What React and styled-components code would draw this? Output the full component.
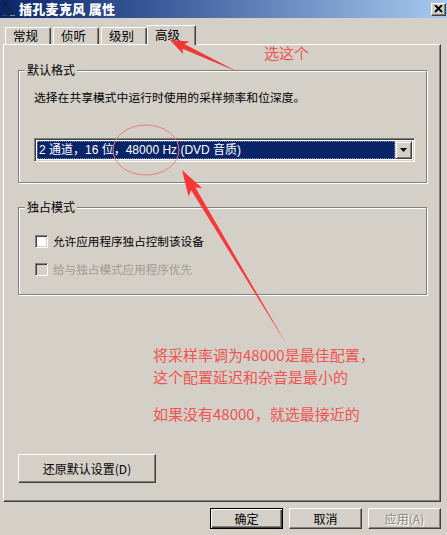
import React from "react";
import styled, { createGlobalStyle } from "styled-components";

const GlobalStyle = createGlobalStyle`
  html, body {
    margin: 0;
    padding: 0;
    background: #d4d0c8;
  }
  body {
    font-family: "Noto Sans CJK SC", "Liberation Sans", sans-serif;
    font-size: 12px;
    color: #000;
  }
`;

const Window = styled.div`
  position: relative;
  width: 447px;
  height: 535px;
  overflow: hidden;
  background: #d4d0c8;
  display: flex;
  flex-direction: column;
`;

const TitleBar = styled.div`
  height: 18px;
  display: flex;
  align-items: center;
  padding: 0 1px 0 1px;
  background: linear-gradient(to right, #0a246a 0%, #3a5a9a 35%, #a6caf0 100%);
  box-sizing: border-box;
`;

const TitleText = styled.span`
  margin-left: 3px;
  color: #fff;
  font-weight: 900;
  font-size: 13px;
  line-height: 18px;
  letter-spacing: 0.3px;
`;

const CloseButton = styled.div`
  margin-left: auto;
  width: 15px;
  height: 13px;
  box-sizing: border-box;
  background: #d4d0c8;
  border: 1px solid;
  border-color: #fff #404040 #404040 #fff;
  box-shadow: inset -1px -1px #808080;
  display: flex;
  align-items: center;
  justify-content: center;
`;

const Body = styled.div`
  flex: 1;
  display: flex;
  flex-direction: column;
  padding: 0 6px 0 3px;
`;

const TabStrip = styled.div`
  height: 19px;
  margin-top: 7px;
  display: flex;
  align-items: flex-end;
`;

const Tab = styled.div`
  position: relative;
  z-index: 1;
  box-sizing: border-box;
  width: ${(p) => (p.$active ? 49 : 46)}px;
  height: ${(p) => (p.$active ? 20 : 17)}px;
  margin-left: ${(p) => (p.$active ? 0 : 2)}px;
  margin-bottom: ${(p) => (p.$active ? -1 : 0)}px;
  background: #d4d0c8;
  border-top: 1px solid #fff;
  border-left: 1px solid #fff;
  border-right: 1px solid #404040;
  border-radius: 2px 2px 0 0;
  box-shadow: inset -1px 0 #808080;
  padding: ${(p) => (p.$active ? "1px 0 0 7px" : "0 0 0 7px")};
  font-size: 12.5px;
  line-height: 15px;
`;

const Panel = styled.div`
  height: 458px;
  box-sizing: border-box;
  border-top: 1px solid #fff;
  border-left: 1px solid #fff;
  border-right: 1px solid #404040;
  border-bottom: 1px solid #404040;
  box-shadow: inset -1px -1px #808080;
  padding: 17px 13px 18px 14px;
  display: flex;
  flex-direction: column;
`;

const GroupBox = styled.fieldset`
  margin: ${(p) => p.$gap || 0}px 0 0 0;
  padding: 0;
  min-width: 0;
  border: 1px solid #808080;
  box-shadow: 1px 1px 0 #fff, inset 1px 1px 0 #fff;
`;

const GroupLegend = styled.legend`
  margin-left: 6px;
  padding: 0 2px;
  background: #d4d0c8;
  font-size: 12px;
  line-height: 16px;
`;

const GroupBody = styled.div`
  padding: ${(p) => p.$pad};
  display: flex;
  flex-direction: column;
`;

const Description = styled.div`
  font-size: 11.8px;
  line-height: 16px;
  white-space: nowrap;
`;

const Select = styled.div`
  margin-top: 33px;
  height: 24px;
  box-sizing: border-box;
  border: 1px solid;
  border-color: #808080 #fff #fff #808080;
  box-shadow: inset 1px 1px #404040, inset -1px -1px #d4d0c8;
  background: #fff;
  padding: 2px;
  display: flex;
`;

const SelectValue = styled.div`
  flex: 1;
  background: #0a246a;
  color: #fff;
  font-family: "Liberation Sans", "Noto Sans CJK SC", sans-serif;
  font-size: 12px;
  line-height: 18px;
  padding-left: 2px;
  outline: 1px dotted rgba(255, 255, 255, 0.45);
  outline-offset: -1px;
  white-space: nowrap;
`;

const DropButton = styled.div`
  width: 17px;
  box-sizing: border-box;
  background: #d4d0c8;
  border: 1px solid;
  border-color: #d4d0c8 #404040 #404040 #d4d0c8;
  box-shadow: inset 1px 1px #fff, inset -1px -1px #808080;
  display: flex;
  align-items: center;
  justify-content: center;
`;

const CheckRow = styled.div`
  height: 16px;
  margin-top: ${(p) => p.$gap}px;
  display: flex;
  align-items: center;
`;

const CheckBox = styled.span`
  width: 13px;
  height: 13px;
  box-sizing: border-box;
  border: 1px solid;
  border-color: #808080 #fff #fff #808080;
  box-shadow: inset 1px 1px #404040, inset -1px -1px #d4d0c8;
  background: ${(p) => (p.$disabled ? "#d4d0c8" : "#fff")};
`;

const CheckLabel = styled.span`
  margin-left: 5px;
  font-size: 11.6px;
  line-height: 16px;
  color: ${(p) => (p.$disabled ? "#a09c94" : "#000")};
`;

const PushButton = styled.div`
  width: ${(p) => p.$w}px;
  height: ${(p) => p.$h}px;
  box-sizing: border-box;
  background: #d4d0c8;
  border: 1px solid;
  border-color: ${(p) => (p.$default ? "#000" : "#fff #404040 #404040 #fff")};
  box-shadow: ${(p) =>
    p.$default
      ? "inset 1px 1px #fff, inset -1px -1px #404040, inset -2px -2px #808080"
      : "inset -1px -1px #808080"};
  display: flex;
  align-items: center;
  justify-content: center;
  font-size: 12px;
  color: ${(p) => (p.$disabled ? "#8c8880" : "#000")};
  text-shadow: ${(p) => (p.$disabled ? "1px 1px 0 #fff" : "none")};
`;

const RestoreRow = styled.div`
  margin-top: auto;
  display: flex;
`;

const Footer = styled.div`
  display: flex;
  justify-content: flex-end;
  gap: 6px;
  padding-top: 6px;
`;

const Overlay = styled.svg`
  position: absolute;
  left: 0;
  top: 0;
  pointer-events: none;
  z-index: 5;
`;

const Note = styled.div`
  position: absolute;
  left: ${(p) => p.$x}px;
  top: ${(p) => p.$y}px;
  z-index: 6;
  color: #f25252;
  font-family: "Noto Sans CJK SC", sans-serif;
  font-size: 15px;
  line-height: 22px;
  white-space: nowrap;
`;

const MicIcon = () => (
  <svg width="15" height="16" viewBox="0 0 15 16">
    <path d="M2 1 L5 1 L6 4 L4 5 Z" fill="#1a1a1a" />
    <line x1="5" y1="4" x2="11" y2="13" stroke="#222" strokeWidth="1.5" />
    <line x1="1" y1="14.5" x2="6" y2="14.5" stroke="#444" strokeWidth="1.2" />
    <line x1="9" y1="14.5" x2="14" y2="14.5" stroke="#8a8a8a" strokeWidth="1" />
  </svg>
);

export default function App() {
  return (
    <Window>
      <GlobalStyle />
      <TitleBar>
        <MicIcon />
        <TitleText>插孔麦克风 属性</TitleText>
        <CloseButton>
          <svg width="9" height="8" viewBox="0 0 9 8">
            <path d="M1 0 L8 7 M8 0 L1 7" stroke="#000" strokeWidth="1.8" />
          </svg>
        </CloseButton>
      </TitleBar>

      <Body>
        <TabStrip>
          <Tab>常规</Tab>
          <Tab>侦听</Tab>
          <Tab>级别</Tab>
          <Tab $active>高级</Tab>
        </TabStrip>

        <Panel>
          <GroupBox>
            <GroupLegend>默认格式</GroupLegend>
            <GroupBody $pad="11px 11px 20px 15px">
              <Description>选择在共享模式中运行时使用的采样频率和位深度。</Description>
              <Select>
                <SelectValue>2 通道，16 位，48000 Hz (DVD 音质)</SelectValue>
                <DropButton>
                  <svg width="7" height="4" viewBox="0 0 7 4">
                    <path d="M0 0 H7 L3.5 4 Z" fill="#000" />
                  </svg>
                </DropButton>
              </Select>
            </GroupBody>
          </GroupBox>

          <GroupBox $gap={16}>
            <GroupLegend>独占模式</GroupLegend>
            <GroupBody $pad="0 11px 17px 16px">
              <CheckRow $gap={18}>
                <CheckBox />
                <CheckLabel>允许应用程序独占控制该设备</CheckLabel>
              </CheckRow>
              <CheckRow $gap={12}>
                <CheckBox $disabled />
                <CheckLabel $disabled>给与独占模式应用程序优先</CheckLabel>
              </CheckRow>
            </GroupBody>
          </GroupBox>

          <RestoreRow>
            <PushButton $w={138} $h={29}>还原默认设置(D)</PushButton>
          </RestoreRow>
        </Panel>

        <Footer>
          <PushButton $w={73} $h={21} $default>确定</PushButton>
          <PushButton $w={73} $h={21}>取消</PushButton>
          <PushButton $w={73} $h={21} $disabled>应用(A)</PushButton>
        </Footer>
      </Body>

      <Note $x={264} $y={42}>选这个</Note>
      <Note $x={153} $y={344}>将采样率调为48000是最佳配置，</Note>
      <Note $x={153} $y={366}>这个配置延迟和杂音是最小的</Note>
      <Note $x={153} $y={403}>如果没有48000，就选最接近的</Note>

      <Overlay width="447" height="535" viewBox="0 0 447 535">
        <ellipse cx="146" cy="150" rx="33" ry="25" fill="none" stroke="#e28080" strokeWidth="1" />
        <polygon
          points="170,40 189.5,41.5 184.7,44.3 238,72 182.5,48.7 183,54"
          fill="#f23535"
        />
        <polygon
          points="182,170 202.3,188.2 195.4,187.6 287,345 191.2,190.2 188.5,196.4"
          fill="#f83838"
        />
      </Overlay>
    </Window>
  );
}
